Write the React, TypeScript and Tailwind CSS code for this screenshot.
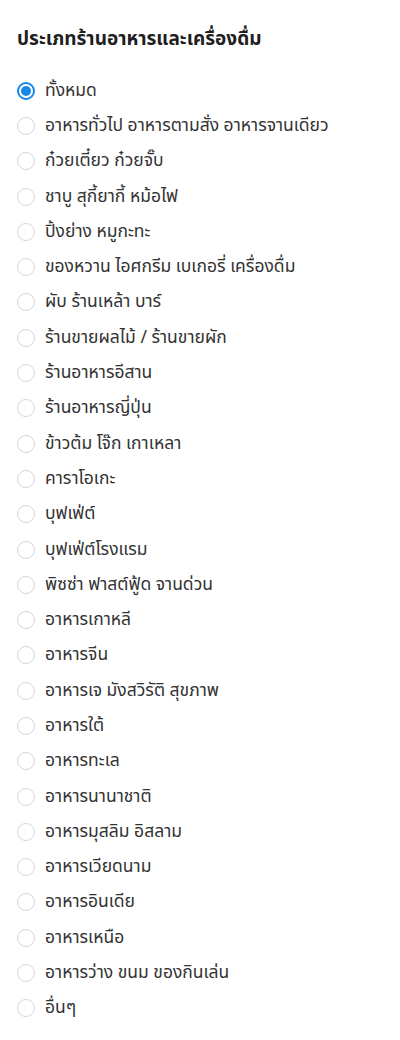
import { useState } from 'react';

const categories = [
  'ทั้งหมด',
  'อาหารทั่วไป อาหารตามสั่ง อาหารจานเดียว',
  'ก๋วยเตี๋ยว ก๋วยจั๊บ',
  'ชาบู สุกี้ยากี้ หม้อไฟ',
  'ปิ้งย่าง หมูกะทะ',
  'ของหวาน ไอศกรีม เบเกอรี่ เครื่องดื่ม',
  'ผับ ร้านเหล้า บาร์',
  'ร้านขายผลไม้ / ร้านขายผัก',
  'ร้านอาหารอีสาน',
  'ร้านอาหารญี่ปุ่น',
  'ข้าวต้ม โจ๊ก เกาเหลา',
  'คาราโอเกะ',
  'บุฟเฟ่ต์',
  'บุฟเฟ่ต์โรงแรม',
  'พิซซ่า ฟาสต์ฟู้ด จานด่วน',
  'อาหารเกาหลี',
  'อาหารจีน',
  'อาหารเจ มังสวิรัติ สุขภาพ',
  'อาหารใต้',
  'อาหารทะเล',
  'อาหารนานาชาติ',
  'อาหารมุสลิม อิสลาม',
  'อาหารเวียดนาม',
  'อาหารอินเดีย',
  'อาหารเหนือ',
  'อาหารว่าง ขนม ของกินเล่น',
  'อื่นๆ',
];

export default function App() {
  const [selected, setSelected] = useState(0);

  return (
    <div className="w-[400px] h-[1040px] bg-white px-[17px] pt-[27px] font-['Noto_Sans_Thai','Noto_Sans','Liberation_Sans',sans-serif]">
      <h2 className="text-[19px] font-bold text-[#1f1f1f] leading-[26px]">ประเภทร้านอาหารและเครื่องดื่ม</h2>
      <div className="mt-[20px] flex flex-col">
        {categories.map((c, i) => (
          <label
            key={c}
            onClick={() => setSelected(i)}
            className="flex items-center h-[35.3px] gap-[10px] cursor-pointer"
          >
            {selected === i ? (
              <span className="w-[18px] h-[18px] rounded-full border-2 border-[#1a86e8] flex items-center justify-center shrink-0">
                <span className="w-[10px] h-[10px] rounded-full bg-[#1a86e8]" />
              </span>
            ) : (
              <span className="w-[18px] h-[18px] rounded-full border border-[#d6d6d6] shrink-0" />
            )}
            <span className="text-[17.5px] leading-[24px] text-[#333333]">{c}</span>
          </label>
        ))}
      </div>
    </div>
  );
}
